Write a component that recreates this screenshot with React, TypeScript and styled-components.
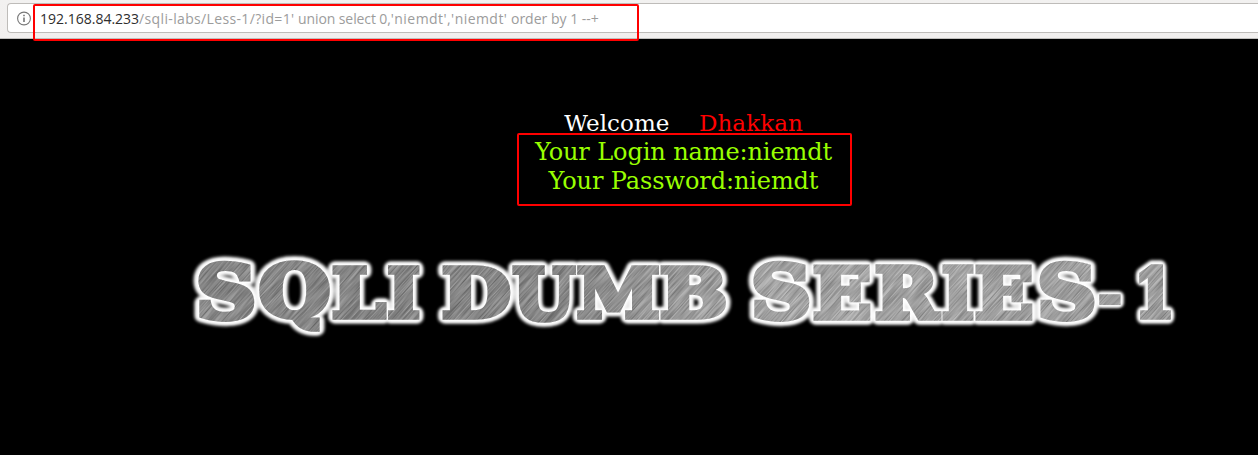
import React from 'react';
import styled, { createGlobalStyle } from 'styled-components';

const GlobalStyle = createGlobalStyle`
  body {
    margin: 0;
    background: #000;
    overflow: hidden;
  }
`;

const Page = styled.div`
  display: flex;
  flex-direction: column;
  width: 100%;
  height: 455px;
  overflow: hidden;
  background: #000;
`;

const Toolbar = styled.header`
  position: relative;
  display: flex;
  flex: none;
  box-sizing: border-box;
  height: 39px;
  padding: 3px 0 5px 7px;
  background: linear-gradient(#f2f1f0, #f1efee);
  border-bottom: 1px solid #bfbebc;
`;

const AddressField = styled.div`
  display: flex;
  flex: 1;
  align-items: center;
  box-sizing: border-box;
  height: 30px;
  padding-left: 9px;
  background: #fff;
  border: 1px solid #bebcb9;
  border-right: 0;
  border-radius: 4px 0 0 4px;
`;

const InfoIcon = styled.svg`
  flex: none;
  width: 15px;
  height: 15px;
  margin-right: 8px;
`;

const Url = styled.div`
  padding-top: 2px;
  font: 14px/20px 'Open Sans', 'Noto Sans', sans-serif;
  white-space: pre;
  color: #9c9c9c;
`;

const UrlPart = styled.span<{ $spacing: number; $host?: boolean }>`
  letter-spacing: ${(p) => p.$spacing}px;
  color: ${(p) => (p.$host ? '#2e2e2e' : 'inherit')};
`;

const Content = styled.main`
  position: relative;
  display: flex;
  flex-direction: column;
  align-items: center;
  width: 1367px;
  padding-top: 70px;
  font-family: 'DejaVu Serif', serif;
`;

const Line = styled.div<{ $size: number; $color: string; $spacing: number }>`
  font-size: ${(p) => p.$size}px;
  line-height: 29px;
  letter-spacing: ${(p) => p.$spacing}px;
  color: ${(p) => p.$color};
  white-space: pre;
`;

const UserName = styled.span`
  color: #f00;
`;

const Banner = styled.svg`
  display: block;
  width: 1010px;
  height: 104px;
  margin-top: 48px;
  font: bold 100px 'DejaVu Serif', serif;
`;

const Highlight = styled.div<{ $x: number; $y: number; $w: number; $h: number }>`
  position: absolute;
  left: ${(p) => p.$x}px;
  top: ${(p) => p.$y}px;
  width: ${(p) => p.$w}px;
  height: ${(p) => p.$h}px;
  box-sizing: border-box;
  border: 2px solid #f00;
  border-radius: 2px;
  pointer-events: none;
`;

/* Ink bounds of each banner glyph at 100px: left, right, ascent, descent. */
const ink: Record<string, [number, number, number, number]> = {
  S: [6, 67, 74, 1],
  Q: [4, 83, 74, 18],
  L: [4, 68, 73, 0],
  I: [4, 43, 73, 0],
  D: [4, 82, 73, 0],
  U: [3, 85, 73, 1],
  M: [4, 106, 73, 0],
  B: [4, 79, 73, 0],
  E: [4, 72, 73, 0],
  R: [4, 83, 73, 0],
  '-': [5, 37, 34, -20],
  '1': [12, 60, 74, 0],
};

/* Box of each letter on the banner: glyph, left, right, top, bottom. */
const letters: [string, number, number, number, number][] = [
  ['S', 198, 255, 262, 322],
  ['Q', 259, 330, 261.5, 332],
  ['L', 332, 386.5, 265, 320],
  ['I', 387.5, 420, 265, 320],
  ['D', 442, 510, 265, 320],
  ['U', 512, 576, 265, 322],
  ['M', 577, 659, 265, 320],
  ['B', 660, 726, 265, 320],
  ['S', 753, 810, 262, 322],
  ['E', 813, 871, 265, 321],
  ['R', 875, 941, 265, 321],
  ['I', 942, 974, 265, 321],
  ['E', 975, 1033, 265, 321],
  ['S', 1039, 1095, 262, 322],
  ['-', 1099, 1121, 294, 305],
  ['1', 1139, 1171, 265, 320],
];

/* Stroke width, in glyph units, that thickens the bold face into a slab. */
const WEIGHT = 8;

function Letters() {
  return (
    <>
      {letters.map(([ch, x0, x1, y0, y1], i) => {
        const [l, r, a, d] = ink[ch];
        const sx = (x1 - x0) / (r - l + WEIGHT);
        const sy = (y1 - y0) / (a + d + WEIGHT);
        const tx = x0 - (l - WEIGHT / 2) * sx;
        const ty = y1 - (d + WEIGHT / 2) * sy;
        return (
          <text key={i} transform={`translate(${tx} ${ty}) scale(${sx} ${sy})`}>
            {ch}
          </text>
        );
      })}
    </>
  );
}

function SeriesBanner() {
  return (
    <Banner viewBox="179 244 1010 104">
      <defs>
        <g id="letters">
          <Letters />
        </g>
        <linearGradient id="steel" gradientUnits="userSpaceOnUse" x1="198" y1="0" x2="1171" y2="0">
          <stop offset="0" stopColor="#868686" />
          <stop offset="0.35" stopColor="#828282" />
          <stop offset="0.52" stopColor="#a0a0a0" />
          <stop offset="0.6" stopColor="#a8a8a8" />
          <stop offset="1" stopColor="#a2a2a2" />
        </linearGradient>
        <filter id="brushed" x="0" y="0" width="1" height="1" colorInterpolationFilters="sRGB">
          <feTurbulence type="fractalNoise" baseFrequency="0.03 0.75" numOctaves="2" seed="4" />
          <feColorMatrix values="2 0 0 0 -0.45  2 0 0 0 -0.45  2 0 0 0 -0.45  0 0 0 0 1" />
        </filter>
        <filter id="glow" filterUnits="userSpaceOnUse" x="179" y="244" width="1010" height="104">
          <feGaussianBlur stdDeviation="1.8" />
        </filter>
        <filter id="soften" filterUnits="userSpaceOnUse" x="179" y="244" width="1010" height="104">
          <feGaussianBlur stdDeviation="0.8" />
        </filter>
        <mask id="face" maskUnits="userSpaceOnUse" x="179" y="244" width="1010" height="104">
          <use href="#letters" fill="#fff" stroke="#fff" strokeWidth={WEIGHT} />
        </mask>
      </defs>
      <use href="#letters" fill="#fff" stroke="#fff" strokeWidth={WEIGHT + 12} strokeLinejoin="round" filter="url(#glow)" opacity="0.9" />
      <use href="#letters" fill="#fff" stroke="#fff" strokeWidth={WEIGHT + 6} strokeLinejoin="round" filter="url(#soften)" />
      <g mask="url(#face)">
        <rect x="179" y="244" width="1010" height="104" fill="url(#steel)" />
        <g opacity="0.22">
          <g transform="rotate(-48 684 296)">
            <rect x="184" y="-204" width="1000" height="1000" filter="url(#brushed)" />
          </g>
        </g>
      </g>
    </Banner>
  );
}

export default function App() {
  return (
    <Page>
      <GlobalStyle />
      <Toolbar>
        <AddressField>
          <InfoIcon viewBox="0 0 15 15" fill="none" stroke="#777">
            <circle cx="7" cy="7.5" r="6.4" strokeWidth="1.1" />
            <path d="M7 6.5V11M7 3.8V5.3" strokeWidth="1.6" />
          </InfoIcon>
          <Url>
            <UrlPart $host $spacing={0}>192.168.84.233</UrlPart>
            <UrlPart $spacing={0.35}>/sqli-labs/Less-1/?id=1'</UrlPart>
            <UrlPart $spacing={-0.1}> union select 0,</UrlPart>
            <UrlPart $spacing={0.45}>'niemdt','niemdt'</UrlPart>
            <UrlPart $spacing={0}> order by 1 --+</UrlPart>
          </Url>
        </AddressField>
        <Highlight $x={33} $y={4} $w={606} $h={37} />
      </Toolbar>
      <Content>
        <Line $size={23} $color="#fff" $spacing={0.06}>
          Welcome{'\u00a0\u00a0\u00a0 '}
          <UserName>Dhakkan</UserName>
        </Line>
        <Line $size={24} $color="#99ff00" $spacing={-0.1}>Your Login name:niemdt</Line>
        <Line $size={24} $color="#99ff00" $spacing={-0.1}>Your Password:niemdt</Line>
        <SeriesBanner />
        <Highlight $x={517} $y={94} $w={335} $h={73} />
      </Content>
    </Page>
  );
}
